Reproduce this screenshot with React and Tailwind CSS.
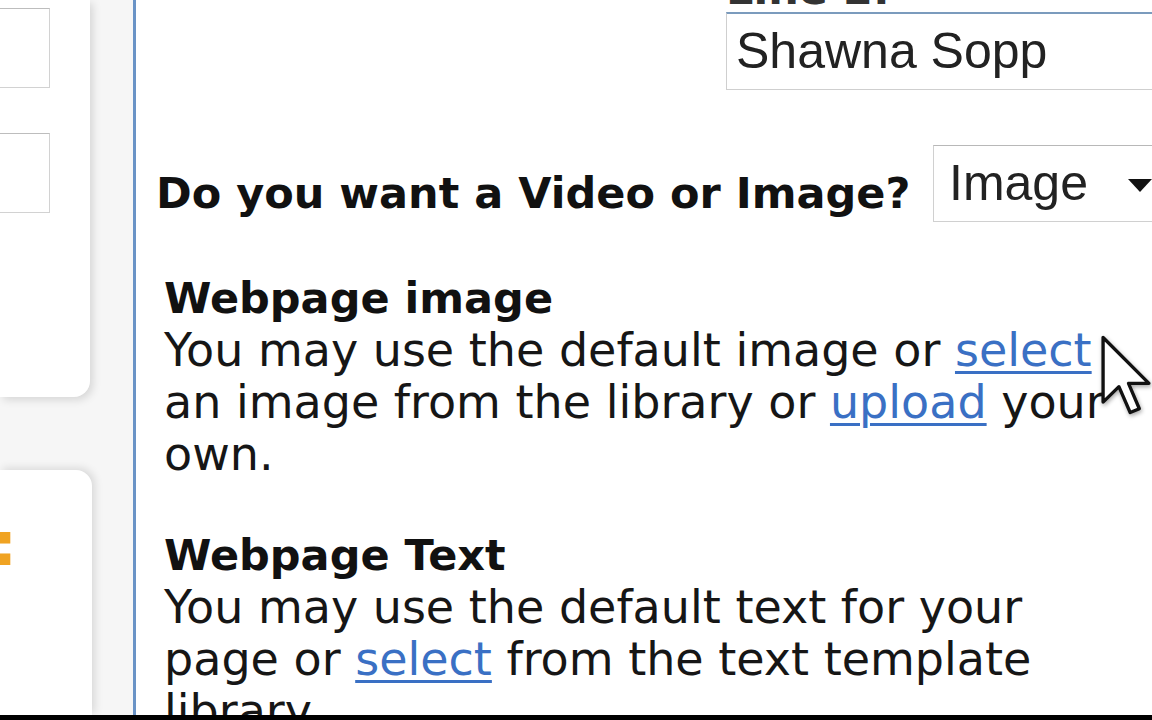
export default function App() {
  const body = "font-['DejaVu_Sans',Verdana,sans-serif]";
  const link = "text-[#3a70c4] underline decoration-[3px] underline-offset-[5px]";

  return (
    <div className={`relative w-[1152px] h-[720px] overflow-hidden flex flex-col bg-white text-[#161616] ${body}`}>
      <div className="flex flex-1 min-h-0">
        {/* side panel with the neighbouring form cards */}
        <aside className="w-[133px] shrink-0 bg-[#f6f6f6] flex flex-col">
          <div className="w-[90px] h-[397px] bg-white rounded-br-2xl shadow-[3px_3px_8px_rgba(0,0,0,0.13)] pt-[8px] flex flex-col gap-[45px]">
            <div className="w-[50px] h-[80px] border-y border-r border-[#d2d2d2] border-t-[#bdbdbd]" />
            <div className="w-[50px] h-[80px] border-y border-r border-[#d2d2d2] border-t-[#bdbdbd]" />
          </div>
          <div className="mt-[73px] w-[92px] flex-1 bg-white rounded-tr-2xl shadow-[3px_-2px_8px_rgba(0,0,0,0.12)] pt-[44px] overflow-hidden">
            <span className="block -ml-[7px] text-[60px] leading-[60px] font-bold text-[#f0a322]">:</span>
          </div>
        </aside>

        <main className="flex-1 min-w-0 border-l-[3px] border-[#6a93c6] pl-[28px] flex flex-col">
          {/* Line 2 field */}
          <div className="ml-[562px] flex flex-col">
            <div className="-mt-[37px] h-[49px] text-[43px] leading-[52px] font-bold text-[#333] whitespace-nowrap">Line 2:</div>
            <div className="w-[440px] h-[78px] shrink-0 border border-[#cfcfcf] border-t-2 border-t-[#7b9bbd] pl-[9px] flex items-center font-['Liberation_Sans',Arial,sans-serif] text-[50px] text-[#222]">
              Shawna Sopp
            </div>
          </div>

          {/* media type */}
          <div className="mt-[55px] -ml-[8px] flex items-start">
            <div className="w-[777px] shrink-0 mt-[22px] text-[43px] leading-[52px] font-bold text-[#111] whitespace-nowrap">
              Do you want a Video or Image?
            </div>
            <div className="w-[260px] h-[77px] shrink-0 border border-[#d0d0d0] border-t-[#b8b8b8] pl-[15px] flex items-center font-['Liberation_Sans',Arial,sans-serif] text-[50px] text-[#222]">
              <span>Image</span>
              <svg width="24" height="14" viewBox="0 0 24 14" className="ml-[40px] mt-[4px] shrink-0">
                <path d="M0 0h24L12 13z" fill="#111" />
              </svg>
            </div>
          </div>

          {/* image section */}
          <section className="mt-[50px]">
            <h2 className="text-[43px] leading-[52px] font-bold text-[#111]">Webpage image</h2>
            <p className="text-[46px] leading-[52px] whitespace-nowrap">
              You may use the default image or <span className={link}>select</span>
              <br />
              an image from the library or <span className={link}>upload</span> your
              <br />
              own.
            </p>
          </section>

          {/* text section */}
          <section className="mt-[49px]">
            <h2 className="text-[43px] leading-[52px] font-bold text-[#111]">Webpage Text</h2>
            <p className="text-[46px] leading-[52px] whitespace-nowrap">
              You may use the default text for your
              <br />
              page or <span className={link}>select</span> from the text template
              <br />
              library.
            </p>
          </section>
        </main>
      </div>
      <div className="h-[5px] shrink-0 bg-black" />

      {/* mouse pointer */}
      <svg width="50" height="80" viewBox="0 0 12 19" className="absolute left-[1101px] top-[335px] drop-shadow-[1px_2px_2px_rgba(0,0,0,0.35)]">
        <path d="M0.5 0.5V16L4.3 12.3L7 18.5L9.2 17.6L6.6 11.5H11.5Z" fill="#fff" stroke="#111" strokeWidth="0.8" strokeLinejoin="round" />
      </svg>
    </div>
  );
}
